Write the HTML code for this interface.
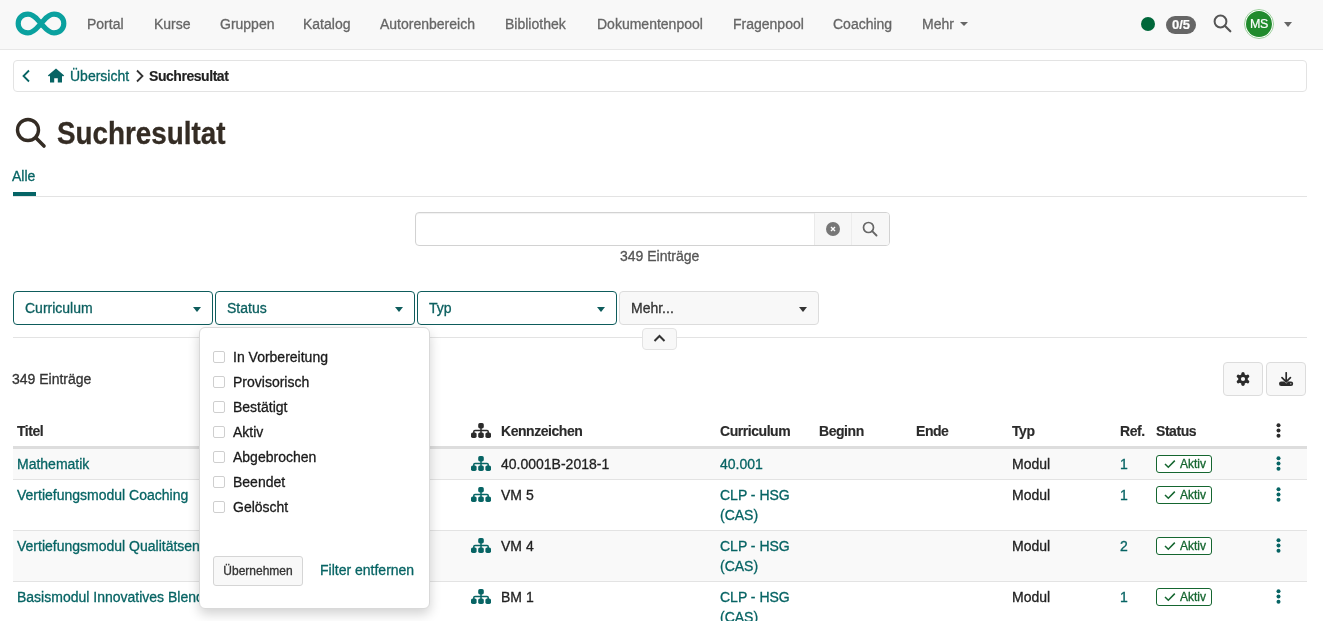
<!DOCTYPE html>
<html><head><meta charset="utf-8">
<style>
*{box-sizing:border-box;margin:0;padding:0}
html,body{width:1323px;height:621px;overflow:hidden;background:#fff;font-family:"Liberation Sans",sans-serif;font-size:14px;color:#222}
.a{position:absolute;white-space:nowrap;line-height:20px}
#nav{position:absolute;left:0;top:0;width:1323px;height:50px;background:#f8f8f8;border-bottom:1px solid #e7e7e7}
.nv{color:#666;top:14px}
.tl{color:#076464}
.bold{font-weight:bold;letter-spacing:-0.45px;-webkit-text-stroke:0.15px}
.btnf{position:absolute;top:291px;height:34px;width:200px;border:1px solid #0e5c5c;border-radius:4px;background:#fff}
.btnf span{position:absolute;left:11px;top:6px;line-height:20px;color:#0b5f5f}
.caret{position:absolute;width:0;height:0;border-left:4.5px solid transparent;border-right:4.5px solid transparent;border-top:5px solid #0e5c5c}
.cb{position:absolute;left:213px;width:12px;height:12px;border:1px solid #cfcfcf;border-radius:2px;background:#fff}
.row{position:absolute;left:13px;width:1294px;border-bottom:1px solid #e3e3e3}
.badge{position:absolute;left:1156px;width:56px;height:18px;border:1px solid #156630;border-radius:3px;color:#156630;font-size:12px;line-height:16px;background:#fff}
#wrap{position:absolute;left:0;top:0;width:1323px;height:621px;will-change:transform;-webkit-text-stroke:0.3px}
</style></head><body><div id="wrap">

<svg width="0" height="0" style="position:absolute">
<defs>
<symbol id="sitemap" viewBox="0 0 20 15"><rect x="7.2" y="0" width="5.6" height="5.4" rx="1.7"/><rect x="0" y="9.4" width="5.6" height="5.6" rx="1.7"/><rect x="7.2" y="9.4" width="5.6" height="5.6" rx="1.7"/><rect x="14.4" y="9.4" width="5.6" height="5.6" rx="1.7"/><path d="M10 4V10M2.8 10V8.6Q2.8 7.4 4 7.4H16Q17.2 7.4 17.2 8.6V10" fill="none" stroke="currentColor" stroke-width="1.5"/></symbol>
<symbol id="kebab" viewBox="0 0 5 15"><circle cx="2.5" cy="2.2" r="2"/><circle cx="2.5" cy="7.5" r="2"/><circle cx="2.5" cy="12.8" r="2"/></symbol>
</defs></svg>
<div id="nav">
  <svg style="position:absolute;left:15px;top:11px" width="52" height="25" viewBox="0 0 52 25">
    <path d="M13 3.2C7 3.2 3.2 7.3 3.2 12.5S7 21.8 13 21.8C19.5 21.8 22.5 16 26 12.5C29.5 9 32.5 3.2 39 3.2C45 3.2 48.8 7.3 48.8 12.5S45 21.8 39 21.8C32.5 21.8 29.5 16 26 12.5C22.5 9 19.5 3.2 13 3.2Z" fill="none" stroke="#0aa19f" stroke-width="5.2"/>
  </svg>
  <div class="a nv" style="left:87px">Portal</div>
  <div class="a nv" style="left:154px">Kurse</div>
  <div class="a nv" style="left:220px">Gruppen</div>
  <div class="a nv" style="left:303px">Katalog</div>
  <div class="a nv" style="left:380px">Autorenbereich</div>
  <div class="a nv" style="left:505px">Bibliothek</div>
  <div class="a nv" style="left:597px">Dokumentenpool</div>
  <div class="a nv" style="left:733px">Fragenpool</div>
  <div class="a nv" style="left:833px">Coaching</div>
  <div class="a nv" style="left:922px">Mehr</div>
  <div class="caret" style="left:960px;top:22px;border-top-color:#666;border-left-width:4px;border-right-width:4px;border-top-width:4px"></div>

  <div style="position:absolute;left:1141px;top:17px;width:14px;height:14px;border-radius:50%;background:#00673a"></div>
  <div style="position:absolute;left:1166px;top:16px;width:30px;height:18px;border-radius:9px;background:#666;color:#fff;font-weight:bold;font-size:13px;line-height:18px;text-align:center;-webkit-text-stroke:0.2px;letter-spacing:0">0/5</div>
  <svg style="position:absolute;left:1213px;top:14px" width="19" height="19" viewBox="0 0 19 19">
    <circle cx="7.5" cy="7.5" r="5.9" fill="none" stroke="#555" stroke-width="2"/>
    <line x1="11.8" y1="11.8" x2="17.3" y2="17.3" stroke="#555" stroke-width="2.2" stroke-linecap="round"/>
  </svg>
  <div style="position:absolute;left:1244px;top:9px;width:30px;height:30px;border-radius:50%;background:#fff;border:1px solid #9ccf9c"></div>
  <div style="position:absolute;left:1246px;top:11px;width:26px;height:26px;border-radius:50%;background:#218b2d;color:#fff;font-size:12.5px;line-height:26px;text-align:center;letter-spacing:-0.4px;-webkit-text-stroke:0.2px">MS</div>
  <div class="caret" style="left:1284px;top:22px;border-top-color:#666;border-left-width:4px;border-right-width:4px;border-top-width:5px"></div>
</div>

<!-- breadcrumb -->
<div style="position:absolute;left:13px;top:60px;width:1294px;height:32px;border:1px solid #e3e3e3;border-radius:4px;background:#fff"></div>
<svg style="position:absolute;left:21px;top:69px" width="10" height="14" viewBox="0 0 10 14">
  <path d="M8 1.5L2.5 7L8 12.5" fill="none" stroke="#076464" stroke-width="1.8"/>
</svg>
<svg style="position:absolute;left:47px;top:68px" width="18" height="15" viewBox="0 0 18 15">
  <path d="M9 0.5L0.8 7.4L2 8.6L3 7.8V14.5H7.2V10.2H10.8V14.5H15V7.8L16 8.6L17.2 7.4Z" fill="#076464"/>
</svg>
<div class="a tl" style="left:70px;top:66px">Übersicht</div>
<svg style="position:absolute;left:135px;top:69px" width="10" height="14" viewBox="0 0 10 14">
  <path d="M2 1.5L7.5 7L2 12.5" fill="none" stroke="#333" stroke-width="1.8"/>
</svg>
<div class="a bold" style="left:149px;top:66px;color:#222">Suchresultat</div>

<!-- title -->
<svg style="position:absolute;left:15px;top:117px" width="32" height="32" viewBox="0 0 32 32">
  <circle cx="13" cy="13" r="10.5" fill="none" stroke="#342c24" stroke-width="3.4"/>
  <line x1="20.8" y1="20.8" x2="29" y2="29" stroke="#342c24" stroke-width="3.6" stroke-linecap="round"/>
</svg>
<div class="a bold" style="left:57px;top:116px;font-size:31px;line-height:36px;color:#342c24;letter-spacing:0;transform:scaleX(0.897);transform-origin:0 0;-webkit-text-stroke:0.3px">Suchresultat</div>

<!-- tabs -->
<div class="a tl" style="left:12px;top:166px">Alle</div>
<div style="position:absolute;left:13px;top:196px;width:1294px;height:1px;background:#e3e3e3"></div>
<div style="position:absolute;left:13px;top:192px;width:23px;height:4px;background:#056466"></div>

<!-- search -->
<div style="position:absolute;left:415px;top:212px;width:475px;height:34px;border:1px solid #d2d2d2;border-radius:4px;background:#fff;overflow:hidden;box-shadow:inset 0 1px 1px rgba(0,0,0,0.06)">
  <div style="position:absolute;left:398px;top:0;width:38px;height:32px;background:#f7f7f7;border-left:1px solid #eaeaea;border-right:1px solid #ececec"></div>
  <div style="position:absolute;left:436px;top:0;width:38px;height:32px;background:#f7f7f7"></div>
</div>
<svg style="position:absolute;left:826px;top:222px" width="14" height="14" viewBox="0 0 14 14">
  <circle cx="7" cy="7" r="7" fill="#777"/>
  <path d="M5 5L9 9M9 5L5 9" stroke="#fff" stroke-width="1.4"/>
</svg>
<svg style="position:absolute;left:862px;top:221px" width="16" height="16" viewBox="0 0 16 16">
  <circle cx="6.5" cy="6.5" r="5" fill="none" stroke="#666" stroke-width="1.7"/>
  <line x1="10.2" y1="10.2" x2="14.5" y2="14.5" stroke="#666" stroke-width="1.9" stroke-linecap="round"/>
</svg>
<div class="a" style="left:620px;top:246px;color:#555">349 Einträge</div>

<!-- filter buttons -->
<div class="btnf" style="left:13px"><span>Curriculum</span></div>
<div class="caret" style="left:193px;top:307px"></div>
<div class="btnf" style="left:215px"><span>Status</span></div>
<div class="caret" style="left:395px;top:307px"></div>
<div class="btnf" style="left:417px"><span>Typ</span></div>
<div class="caret" style="left:597px;top:307px"></div>
<div class="btnf" style="left:619px;background:#f8f8f8;border-color:#dcdcdc"><span style="color:#333">Mehr...</span></div>
<div class="caret" style="left:799px;top:307px;border-top-color:#333"></div>

<div style="position:absolute;left:13px;top:337px;width:1294px;height:1px;background:#e3e3e3"></div>
<div style="position:absolute;left:642px;top:328px;width:35px;height:22px;border:1px solid #e3e3e3;border-radius:4px;background:#f8f8f8"></div>
<svg style="position:absolute;left:653px;top:333px" width="13" height="10" viewBox="0 0 13 10">
  <path d="M1.5 8L6.5 3L11.5 8" fill="none" stroke="#333" stroke-width="2"/>
</svg>

<!-- count + buttons -->
<div class="a" style="left:12px;top:369px;color:#333">349 Einträge</div>
<div style="position:absolute;left:1223px;top:362px;width:40px;height:34px;border:1px solid #dcdcdc;border-radius:4px;background:#f8f8f8"></div>
<div style="position:absolute;left:1266px;top:362px;width:40px;height:34px;border:1px solid #dcdcdc;border-radius:4px;background:#f8f8f8"></div>
<svg style="position:absolute;left:1236px;top:371.5px" width="14" height="14" viewBox="0 0 14 14">
  <g stroke="#2b2b2b" stroke-width="3.4" stroke-linecap="round">
    <line x1="7" y1="7" x2="7" y2="1.7"/><line x1="7" y1="7" x2="7" y2="12.3"/>
    <line x1="7" y1="7" x2="11.6" y2="4.35"/><line x1="7" y1="7" x2="2.4" y2="4.35"/>
    <line x1="7" y1="7" x2="11.6" y2="9.65"/><line x1="7" y1="7" x2="2.4" y2="9.65"/>
  </g>
  <circle cx="7" cy="7" r="4.8" fill="#2b2b2b"/>
  <circle cx="7" cy="7" r="2.1" fill="#f8f8f8"/>
</svg>
<svg style="position:absolute;left:1279px;top:371.5px" width="15" height="15" viewBox="0 0 15 15">
  <path d="M7.2 0.8V10M3 5.6L7.2 9.8L11.4 5.6" fill="none" stroke="#2b2b2b" stroke-width="1.7" stroke-linecap="round" stroke-linejoin="round"/>
  <path d="M2.2 9.6H5.2L7.2 11.4L9.2 9.6H12A2.2 2.2 0 0 1 12 14H2.2A2.2 2.2 0 0 1 2.2 9.6Z" fill="#2b2b2b"/>
  <circle cx="11.8" cy="11.8" r="0.7" fill="#bbb"/>
</svg>

<!-- table header -->
<div class="a bold" style="left:17px;top:421px;color:#2b2b2b">Titel</div>
<svg style="position:absolute;left:471px;top:423px;color:#2b2b2b" width="20" height="15"><use href="#sitemap" fill="#2b2b2b"/></svg>
<div class="a bold" style="left:501px;top:421px;color:#2b2b2b">Kennzeichen</div>
<div class="a bold" style="left:720px;top:421px;color:#2b2b2b">Curriculum</div>
<div class="a bold" style="left:819px;top:421px;color:#2b2b2b">Beginn</div>
<div class="a bold" style="left:916px;top:421px;color:#2b2b2b">Ende</div>
<div class="a bold" style="left:1012px;top:421px;color:#2b2b2b">Typ</div>
<div class="a bold" style="left:1120px;top:421px;color:#2b2b2b">Ref.</div>
<div class="a bold" style="left:1156px;top:421px;color:#2b2b2b">Status</div>
<svg style="position:absolute;left:1276px;top:423px" width="5" height="15" viewBox="0 0 5 15"><g fill="#2b2b2b"><circle cx="2.5" cy="2.2" r="2"/><circle cx="2.5" cy="7.5" r="2"/><circle cx="2.5" cy="12.8" r="2"/></g></svg>
<div style="position:absolute;left:13px;top:446px;width:1294px;height:3px;background:#dddddd"></div>

<!-- rows -->
<div class="row" style="top:449px;height:31px;background:#f9f9f9"></div>
<div class="row" style="top:480px;height:51px;background:#fff"></div>
<div class="row" style="top:531px;height:51px;background:#f9f9f9"></div>
<div class="row" style="top:582px;height:51px;background:#fff"></div>

<div class="a tl" style="left:17px;top:454px">Mathematik</div>
<svg class="smi" style="color:#076464;position:absolute;left:471px;top:456px" width="20" height="15"><use href="#sitemap" fill="#076464"/></svg>
<div class="a" style="left:501px;top:454px;color:#222">40.0001B-2018-1</div>
<div class="a tl" style="left:720px;top:454px">40.001</div>
<div class="a" style="left:1012px;top:454px;color:#222">Modul</div>
<div class="a tl" style="left:1120px;top:454px">1</div>
<div class="badge" style="top:455px"><svg style="position:absolute;left:6.5px;top:3px" width="12" height="10" viewBox="0 0 12 10"><path d="M1 5L4.3 8.2L10.8 1.6" fill="none" stroke="#156630" stroke-width="1.5"/></svg><span style="position:absolute;left:23px;top:0">Aktiv</span></div>
<svg style="position:absolute;left:1276px;top:456px" width="5" height="15"><use href="#kebab" fill="#076464"/></svg>
<div class="a tl" style="left:17px;top:485px">Vertiefungsmodul Coaching</div>
<svg class="smi" style="color:#076464;position:absolute;left:471px;top:487px" width="20" height="15"><use href="#sitemap" fill="#076464"/></svg>
<div class="a" style="left:501px;top:485px;color:#222">VM 5</div>
<div class="a tl" style="left:720px;top:485px">CLP - HSG</div>
<div class="a tl" style="left:720px;top:505px">(CAS)</div>
<div class="a" style="left:1012px;top:485px;color:#222">Modul</div>
<div class="a tl" style="left:1120px;top:485px">1</div>
<div class="badge" style="top:486px"><svg style="position:absolute;left:6.5px;top:3px" width="12" height="10" viewBox="0 0 12 10"><path d="M1 5L4.3 8.2L10.8 1.6" fill="none" stroke="#156630" stroke-width="1.5"/></svg><span style="position:absolute;left:23px;top:0">Aktiv</span></div>
<svg style="position:absolute;left:1276px;top:487px" width="5" height="15"><use href="#kebab" fill="#076464"/></svg>
<div class="a tl" style="left:17px;top:536px">Vertiefungsmodul Qualitätsentwicklung</div>
<svg class="smi" style="color:#076464;position:absolute;left:471px;top:538px" width="20" height="15"><use href="#sitemap" fill="#076464"/></svg>
<div class="a" style="left:501px;top:536px;color:#222">VM 4</div>
<div class="a tl" style="left:720px;top:536px">CLP - HSG</div>
<div class="a tl" style="left:720px;top:556px">(CAS)</div>
<div class="a" style="left:1012px;top:536px;color:#222">Modul</div>
<div class="a tl" style="left:1120px;top:536px">2</div>
<div class="badge" style="top:537px"><svg style="position:absolute;left:6.5px;top:3px" width="12" height="10" viewBox="0 0 12 10"><path d="M1 5L4.3 8.2L10.8 1.6" fill="none" stroke="#156630" stroke-width="1.5"/></svg><span style="position:absolute;left:23px;top:0">Aktiv</span></div>
<svg style="position:absolute;left:1276px;top:538px" width="5" height="15"><use href="#kebab" fill="#076464"/></svg>
<div class="a tl" style="left:17px;top:587px">Basismodul Innovatives Blended Learning</div>
<svg class="smi" style="color:#076464;position:absolute;left:471px;top:589px" width="20" height="15"><use href="#sitemap" fill="#076464"/></svg>
<div class="a" style="left:501px;top:587px;color:#222">BM 1</div>
<div class="a tl" style="left:720px;top:587px">CLP - HSG</div>
<div class="a tl" style="left:720px;top:607px">(CAS)</div>
<div class="a" style="left:1012px;top:587px;color:#222">Modul</div>
<div class="a tl" style="left:1120px;top:587px">1</div>
<div class="badge" style="top:588px"><svg style="position:absolute;left:6.5px;top:3px" width="12" height="10" viewBox="0 0 12 10"><path d="M1 5L4.3 8.2L10.8 1.6" fill="none" stroke="#156630" stroke-width="1.5"/></svg><span style="position:absolute;left:23px;top:0">Aktiv</span></div>
<svg style="position:absolute;left:1276px;top:589px" width="5" height="15"><use href="#kebab" fill="#076464"/></svg>

<!-- popup -->
<div style="position:absolute;left:199px;top:327px;width:231px;height:282px;background:#fff;border:1px solid #d9d9d9;border-radius:6px;box-shadow:0 5px 12px rgba(0,0,0,0.18)"></div>
<div class="cb" style="top:351px"></div><div class="a" style="left:233px;top:347px;color:#1a1a1a">In Vorbereitung</div>
<div class="cb" style="top:376px"></div><div class="a" style="left:233px;top:372px;color:#1a1a1a">Provisorisch</div>
<div class="cb" style="top:401px"></div><div class="a" style="left:233px;top:397px;color:#1a1a1a">Bestätigt</div>
<div class="cb" style="top:426px"></div><div class="a" style="left:233px;top:422px;color:#1a1a1a">Aktiv</div>
<div class="cb" style="top:451px"></div><div class="a" style="left:233px;top:447px;color:#1a1a1a">Abgebrochen</div>
<div class="cb" style="top:476px"></div><div class="a" style="left:233px;top:472px;color:#1a1a1a">Beendet</div>
<div class="cb" style="top:501px"></div><div class="a" style="left:233px;top:497px;color:#1a1a1a">Gelöscht</div>
<div style="position:absolute;left:213px;top:556px;width:90px;height:30px;border:1px solid #d5d5d5;border-radius:3px;background:#f8f8f8;color:#333;font-size:12px;line-height:28px;text-align:center">Übernehmen</div>
<div class="a tl" style="left:320px;top:560px">Filter entfernen</div>

</div></body></html>
